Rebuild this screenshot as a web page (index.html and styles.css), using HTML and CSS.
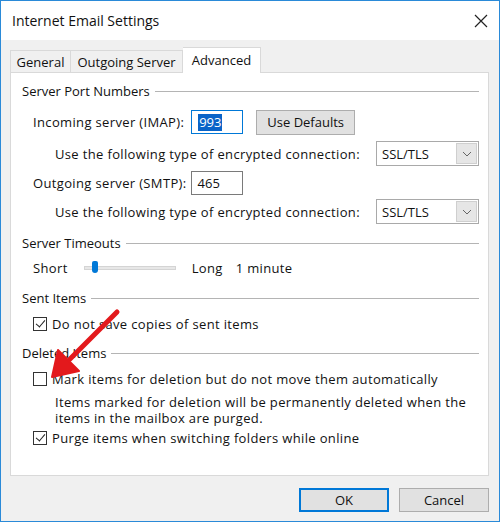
FILE: index.html
```html
<!DOCTYPE html>
<html lang="en">
<head>
  <meta charset="UTF-8" />
  <title>Internet Email Settings</title>
  <link rel="stylesheet" href="styles.css">
</head>
<body>
  <div class="window">
    <div class="titlebar">
      <span class="title">Internet Email Settings</span>
      <svg class="close" width="14" height="14" viewBox="0 0 14 14">
        <path d="M1 1 L13 13 M13 1 L1 13" stroke="#222" stroke-width="1.2" fill="none"/>
      </svg>
    </div>

    <div class="dialog-body">
      <div class="tabs">
        <div class="tab tab-general">General</div>
        <div class="tab tab-outgoing">Outgoing Server</div>
        <div class="tab tab-advanced active">Advanced</div>
      </div>

      <div class="panel">
        <!-- Server Port Numbers -->
        <div class="group-head g-ports"><span>Server Port Numbers</span><i></i></div>
        <div class="row r-incoming">
          <span class="label">Incoming server (IMAP):</span>
          <div class="textbox focused"><span class="sel">993</span></div>
          <button class="btn btn-defaults">Use Defaults</button>
        </div>
        <div class="row r-enc sub">
          <span class="label">Use the following type of encrypted connection:</span>
          <div class="combo"><span>SSL/TLS</span><b class="combo-btn"><svg width="10" height="6" viewBox="0 0 10 6"><path d="M1 1 L5 5 L9 1" stroke="#666" fill="none"/></svg></b></div>
        </div>
        <div class="row r-outgoing">
          <span class="label">Outgoing server (SMTP):</span>
          <div class="textbox tb-out"><span>465</span></div>
        </div>
        <div class="row r-enc2 sub">
          <span class="label">Use the following type of encrypted connection:</span>
          <div class="combo"><span>SSL/TLS</span><b class="combo-btn"><svg width="10" height="6" viewBox="0 0 10 6"><path d="M1 1 L5 5 L9 1" stroke="#666" fill="none"/></svg></b></div>
        </div>

        <!-- Server Timeouts -->
        <div class="group-head g-timeouts"><span>Server Timeouts</span><i></i></div>
        <div class="row r-slider">
          <span class="label">Short</span>
          <div class="slider"><div class="track"></div><div class="thumb"></div></div>
          <span class="label">Long</span>
          <span class="label minute">1 minute</span>
        </div>

        <!-- Sent Items -->
        <div class="group-head g-sent"><span>Sent Items</span><i></i></div>
        <div class="row r-check1">
          <span class="check checked"></span>
          <span class="label">Do not save copies of sent items</span>
        </div>

        <!-- Deleted Items -->
        <div class="group-head g-deleted"><span>Deleted Items</span><i></i></div>
        <div class="row r-mark">
          <span class="check"></span>
          <span class="label">Mark items for deletion but do not move them automatically</span>
        </div>
        <p class="note">Items marked for deletion will be permanently deleted when the<br>items in the mailbox are purged.</p>
        <div class="row r-purge">
          <span class="check checked"></span>
          <span class="label">Purge items when switching folders while online</span>
        </div>
      </div>

      <div class="footer">
        <button class="btn btn-ok">OK</button>
        <button class="btn btn-cancel">Cancel</button>
      </div>
    </div>

    <svg class="arrow" width="500" height="524" viewBox="0 0 500 524">
      <line x1="117" y1="312" x2="70" y2="359" stroke="#e3191c" stroke-width="5" stroke-linecap="round"/>
      <polygon points="52,377 58,350 79,371" fill="#e3191c" stroke="#e3191c" stroke-width="2" stroke-linejoin="round"/>
    </svg>
  </div>
</body>
</html>
```

FILE: styles.css
```css
* { margin: 0; padding: 0; box-sizing: border-box; }
body { font-family: "Open Sans", "Noto Sans", sans-serif; font-size: 13px; color: #111; background: #fff; }

.window {
  position: relative;
  width: 500px; height: 522px;
  border: 1px solid #2a8ad8;
  display: flex; flex-direction: column;
}

.titlebar {
  height: 39px; background: #fff;
  display: flex; align-items: center; justify-content: space-between;
  padding: 0 11px 0 11px;
}
.title { font-size: 14px; color: #111; }

.dialog-body {
  flex: 1; background: #f0f0f0;
  padding: 7px 10px 0 9px;
  display: flex; flex-direction: column;
}

.tabs { display: flex; align-items: flex-end; height: 25px; position: relative; z-index: 1; }
.tab {
  height: 22px; border: 1px solid #d9d9d9; border-bottom: none;
  background: #f0f0f0; color: #111;
  display: flex; align-items: center; justify-content: center;
}
.tab + .tab { border-left: none; }
.tab-general { width: 61px; }
.tab-outgoing { width: 112px; }
.tab-advanced { width: 78px; }
.tab.active { height: 26px; background: #fff; margin-bottom: -1px; align-items: flex-start; padding-top: 3px; }

.panel {
  height: 404px; background: #fff; border: 1px solid #d9d9d9;
  padding: 8px 9px 0 11px;
}

.group-head { display: flex; align-items: center; height: 20px; line-height: 20px; }
.group-head i { flex: 1; height: 1px; background: #b4b4b4; margin-left: 5px; }

.row { display: flex; align-items: center; padding-left: 11px; line-height: 20px; }
.row.sub { padding-left: 33px; }
.label, .note { letter-spacing: 0.35px; }

.r-incoming { margin-top: 9px; height: 24px; }
.r-enc { margin-top: 7px; height: 25px; }
.r-outgoing { margin-top: 5px; height: 24px; }
.r-enc2 { margin-top: 4px; height: 25px; }
.g-timeouts { margin-top: 9px; }
.r-slider { margin-top: 5px; height: 20px; }
.g-sent { margin-top: 10px; }
.r-check1 { margin-top: 6px; height: 20px; }
.g-deleted { margin-top: 9px; }
.r-mark { margin-top: 6px; height: 20px; }
.note { margin-top: 5px; padding-left: 33px; line-height: 16px; }
.r-purge { margin-top: 2px; height: 20px; }

.textbox {
  width: 52px; height: 24px; border: 1px solid #7a7a7a; background: #fff;
  display: flex; align-items: center; padding-left: 6px;
}
.textbox.focused { border-color: #0078d7; margin-left: 7px; }
.tb-out { margin-left: 4px; }
.sel { background: #0a64c8; color: #fff; line-height: 17px; padding: 0 1px; }

.btn {
  font-family: inherit; font-size: 13px; color: #111;
  background: #e1e1e1; border: 1px solid #adadad; height: 24px;
}
.btn-defaults { width: 99px; height: 25px; margin-left: 13px; }

.combo {
  margin-left: auto; width: 103px; height: 25px;
  border: 1px solid #a9a9a9; background: #fff;
  display: flex; align-items: center; justify-content: space-between;
  padding-left: 5px; padding-right: 1px;
}
.combo-btn {
  width: 21px; height: 21px; background: #e6e6e6; border: 1px solid #cfcfcf;
  display: flex; align-items: center; justify-content: center;
}

.slider { position: relative; width: 92px; height: 14px; margin: 0 16px 0 16px; }
.track { position: absolute; left: 0; right: 0; top: 5px; height: 4px; background: #e7e7e7; border: 1px solid #d4d4d4; }
.thumb { position: absolute; left: 8px; top: 0; width: 6px; height: 12px; background: #0078d7; border-radius: 2px 2px 3px 3px; }
.minute { margin-left: 13px; }

.check {
  width: 14px; height: 14px; border: 1px solid #333; background: #fff;
  margin-right: 5px; position: relative; flex-shrink: 0;
}
.check.checked::after {
  content: ""; position: absolute; left: 4px; top: 0px;
  width: 4px; height: 8px;
  border-right: 1.3px solid #222; border-bottom: 1.3px solid #222;
  transform: rotate(40deg);
}

.footer { display: flex; justify-content: flex-end; gap: 10px; margin-top: 12px; }
.btn-ok { width: 90px; border: 2px solid #0078d7; }
.btn-cancel { width: 90px; }

.arrow { position: absolute; left: -1px; top: -1px; pointer-events: none; }
```
